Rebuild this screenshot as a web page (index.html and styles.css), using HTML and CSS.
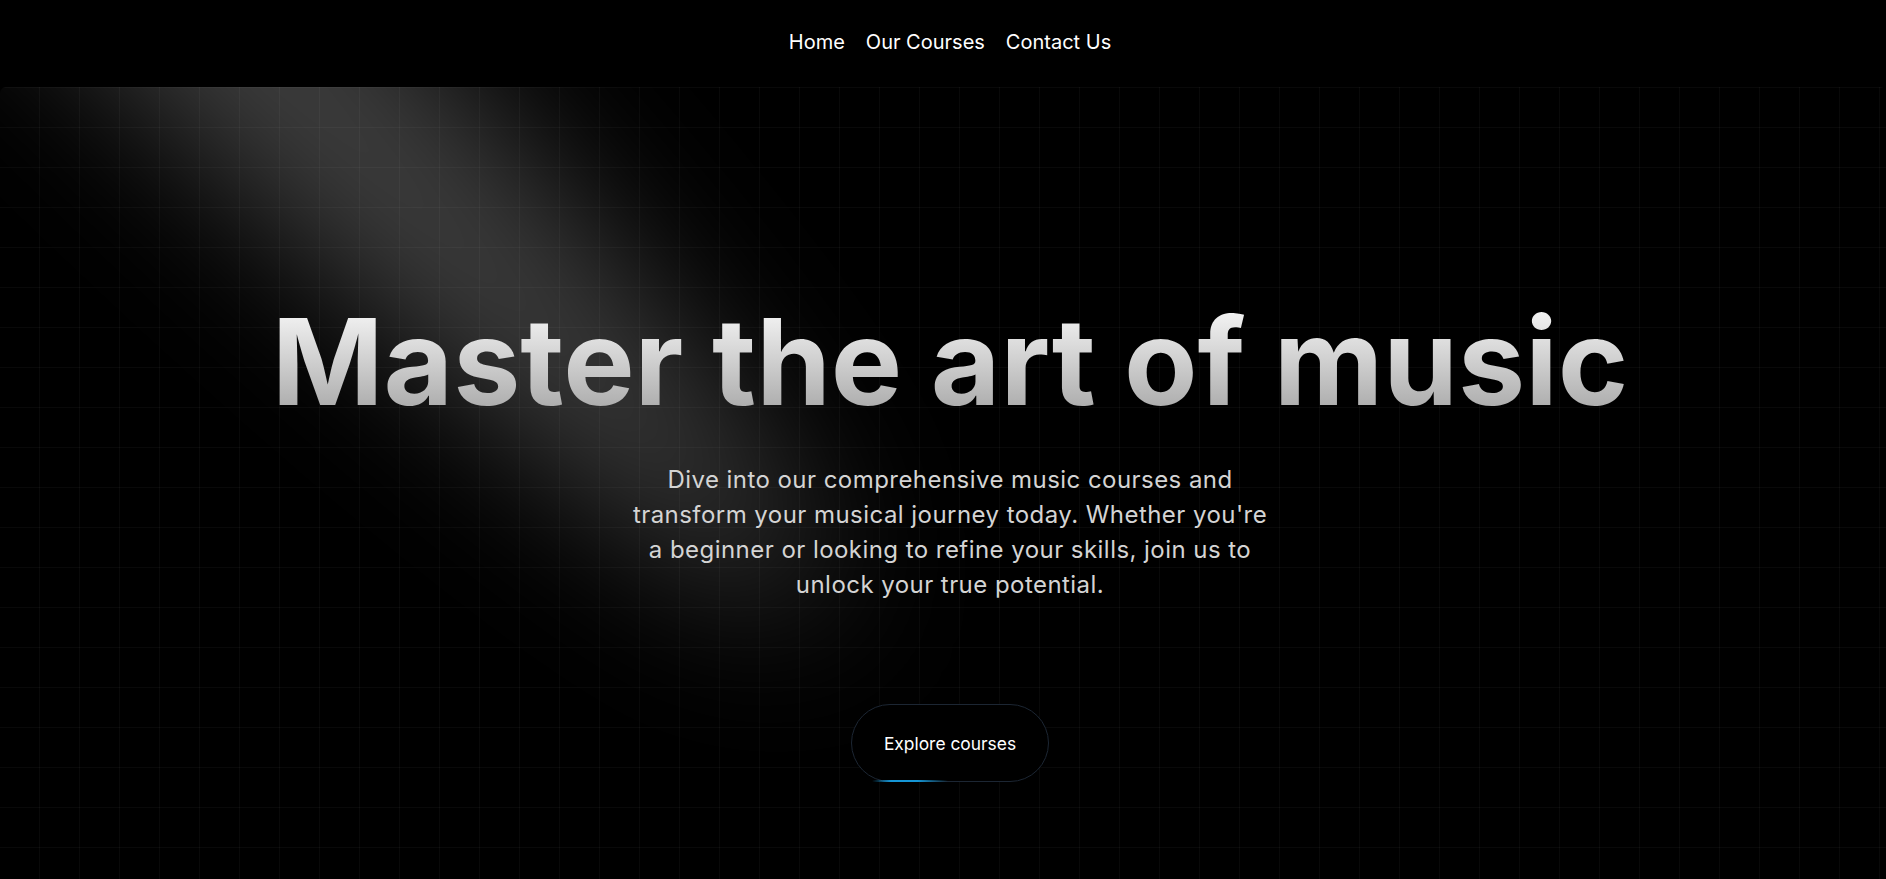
FILE: index.html
```html
<!DOCTYPE html>
<html lang="en">
<head>
<meta charset="utf-8">
<title>Music School</title>
<link rel="stylesheet" href="styles.css">
</head>
<body>
<nav class="nav">
  <a class="nav-link" href="#">Home</a>
  <a class="nav-link" href="#">Our Courses</a>
  <a class="nav-link" href="#">Contact Us</a>
</nav>
<section class="hero">
  <svg class="spotlight" viewBox="0 0 1886 792" fill="none" aria-hidden="true">
    <defs>
      <filter id="beam-blur" x="-1500" y="-1500" width="4500" height="4500" filterUnits="userSpaceOnUse" color-interpolation-filters="sRGB">
        <feGaussianBlur stdDeviation="78"/>
      </filter>
    </defs>
    <g filter="url(#beam-blur)">
      <ellipse cx="110" cy="-192" rx="1000" ry="120" transform="rotate(45 110 -192)" fill="#fff" fill-opacity="0.25"/>
    </g>
  </svg>
  <div class="hero-content">
    <h1 class="title">Master the art of music</h1>
    <p class="lead">Dive into our comprehensive music courses and transform your musical journey today. Whether you're a beginner or looking to refine your skills, join us to unlock your true potential.</p>
    <a class="cta" href="#"><span class="cta-glow"></span><span class="cta-label">Explore courses</span></a>
  </div>
</section>
</body>
</html>
```

FILE: styles.css
```css
html, body {
  margin: 0;
  height: 100%;
  background: #000;
  overflow: hidden;
}

body {
  font-family: Inter, "Noto Sans", sans-serif;
  color: #fff;
}

.nav {
  height: 87px;
  box-sizing: border-box;
  padding: 30px 0 0 14px;
  display: flex;
  justify-content: center;
  align-items: flex-start;
  gap: 21px;
}

.nav-link {
  color: #fff;
  text-decoration: none;
  font-size: 20px;
  line-height: 24px;
}

.hero {
  position: relative;
  height: 792px;
  border-radius: 6px;
  overflow: hidden;
  background-color: #000;
  background-image:
    linear-gradient(to right, transparent 39px, rgba(255, 255, 255, 0.035) 39px),
    linear-gradient(to bottom, rgba(255, 255, 255, 0.035) 1px, transparent 1px);
  background-size: 40px 40px;
}

.spotlight {
  position: absolute;
  left: 0;
  top: 0;
  width: 1886px;
  height: 792px;
  pointer-events: none;
}

.hero-content {
  position: relative;
  z-index: 1;
  display: flex;
  flex-direction: column;
  align-items: center;
  padding: 215px 0 0 14px;
}

.title {
  margin: 0;
  font-size: 120px;
  line-height: 120px;
  font-weight: 700;
  background: linear-gradient(to bottom, #fafafa, #a3a3a3);
  -webkit-background-clip: text;
  background-clip: text;
  color: transparent;
  white-space: nowrap;
}

.lead {
  margin: 40px 0 0;
  max-width: 650px;
  font-size: 24px;
  line-height: 35px;
  letter-spacing: 0.45px;
  color: #d4d4d4;
  text-align: center;
}

.cta {
  position: relative;
  margin-top: 102px;
  height: 78px;
  box-sizing: border-box;
  padding: 0 32px;
  display: inline-flex;
  align-items: center;
  justify-content: center;
  border: 1px solid #1c2633;
  border-radius: 9999px;
  background: #000;
  color: #fff;
  text-decoration: none;
  font-size: 17.4px;
}

.cta-glow {
  position: absolute;
  left: 20px;
  bottom: -1px;
  width: 76px;
  height: 2px;
  border-radius: 2px;
  background: linear-gradient(90deg, rgba(14, 165, 233, 0), #1596d6 25%, #1596d6 60%, rgba(14, 165, 233, 0));
}
```
